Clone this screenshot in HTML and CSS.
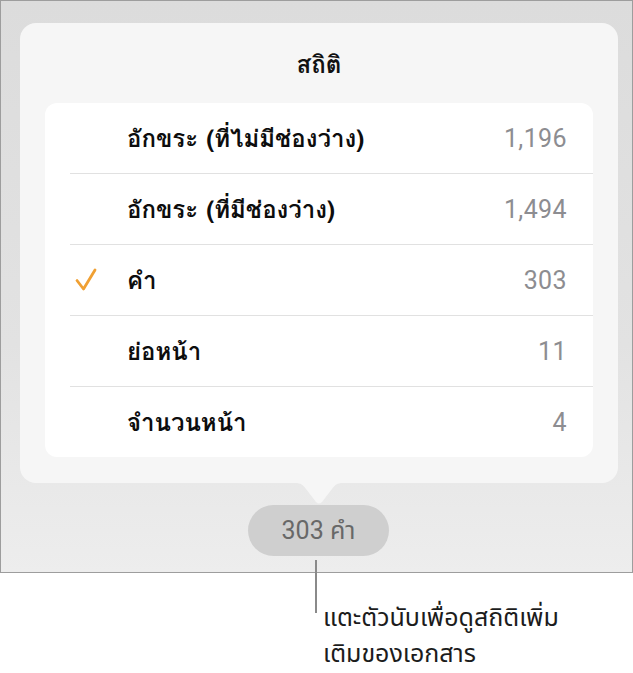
FILE: index.html
```html
<!DOCTYPE html>
<html lang="th">
<head>
<meta charset="utf-8">
<link rel="stylesheet" href="styles.css">
</head>
<body>
<div class="frame">
  <div class="popover">
    <div class="title">สถิติ</div>
    <div class="list">
      <div class="row"><span class="check"></span><span class="label">อักขระ (ที่ไม่มีช่องว่าง)</span><span class="value">1,196</span></div>
      <div class="row"><span class="check"></span><span class="label">อักขระ (ที่มีช่องว่าง)</span><span class="value">1,494</span></div>
      <div class="row"><span class="check"><svg width="22" height="24" viewBox="0 0 22 24"><path d="M2 12.5 L8.5 21 L20 2" fill="none" stroke="#f0a033" stroke-width="2.8" stroke-linecap="round" stroke-linejoin="round"/></svg></span><span class="label">คำ</span><span class="value">303</span></div>
      <div class="row"><span class="check"></span><span class="label">ย่อหน้า</span><span class="value">11</span></div>
      <div class="row"><span class="check"></span><span class="label">จำนวนหน้า</span><span class="value">4</span></div>
    </div>
    <svg class="arrow" width="48" height="22" viewBox="0 0 48 22"><path d="M0 0 L48 0 C42 0 40 2 37 6 L27 19 Q24 22 21 19 L11 6 C8 2 6 0 0 0 Z" fill="#f6f6f6"/></svg>
  </div>
  <div class="pill">303 คำ</div>
</div>
<div class="callout">
  <div class="leader"></div>
  <div class="caption">แตะตัวนับเพื่อดูสถิติเพิ่ม<br>เติมของเอกสาร</div>
</div>
</body>
</html>
```
FILE: styles.css
```css
* { box-sizing: border-box; }
body {
  margin: 0;
  background: #ffffff;
  font-family: "Noto Sans Thai", "Noto Sans", Roboto, sans-serif;
}
.frame {
  position: relative;
  width: 633px;
  height: 573px;
  border: 1px solid #9d9d9d;
  background: linear-gradient(180deg, #dcdcdc 0%, #e2e2e2 60%, #ededed 100%);
  padding: 22px 14px 0 19px;
}
.popover {
  position: relative;
  height: 460px;
  background: #f6f6f6;
  border-radius: 16px;
  padding: 0 25px;
}
.title {
  height: 80px;
  display: flex;
  align-items: center;
  justify-content: center;
  font-family: "Loma", "Garuda", "Kinnari", "Noto Sans Thai Looped", "Noto Sans Thai", "Noto Sans", sans-serif;
  font-size: 24px;
  font-weight: 700;
  color: #111;
  padding-top: 2px;
}
.list {
  background: #ffffff;
  border-radius: 12px;
  overflow: hidden;
}
.row {
  height: 71px;
  display: flex;
  align-items: center;
  margin-left: 25px;
  padding-right: 26px;
  border-bottom: 1px solid #e1e1e1;
}
.row:last-child { border-bottom: none; height: 70px; }
.check {
  width: 57px;
  display: flex;
  align-items: center;
  padding-left: 5px;
}
.label {
  flex: 1;
  font-family: "Loma", "Garuda", "Kinnari", "Noto Sans Thai Looped", "Noto Sans Thai", "Noto Sans", sans-serif;
  font-size: 24px;
  font-weight: 700;
  color: #0d0d0d;
}
.value {
  font-family: Roboto, "Noto Sans", sans-serif;
  font-size: 25px;
  letter-spacing: 0.4px;
  color: #8d8d91;
}
.arrow {
  position: absolute;
  left: 275px;
  top: 460px;
  display: block;
}
.pill {
  width: 141px;
  height: 51px;
  margin: 22px 0 0 228px;
  border-radius: 26px;
  background: #cfcfcf;
  color: #686868;
  display: flex;
  align-items: center;
  justify-content: center;
  font-family: Roboto, "Noto Sans Thai", sans-serif;
  font-size: 25px;
}
.callout {
  position: relative;
  display: flex;
  align-items: flex-start;
  margin-top: -13px;
  padding-left: 315px;
}
.leader {
  width: 2px;
  height: 53px;
  background: #8a8a8a;
  flex: none;
}
.caption {
  margin-left: 6px;
  margin-top: 40px;
  font-size: 25px;
  line-height: 36px;
  color: #1c1c1c;
}
```
